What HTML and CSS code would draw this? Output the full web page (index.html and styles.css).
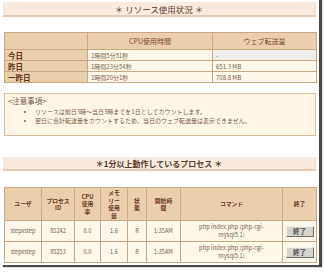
FILE: index.html
```html
<!DOCTYPE html>
<html lang="ja">
<head>
<meta charset="utf-8">
<link rel="stylesheet" href="styles.css">
</head>
<body>
<div class="frame">
  <div class="bar bar-first">＊ リソース使用状況 ＊</div>
  <table class="usage">
    <colgroup><col class="c1"><col class="c2"><col class="c3"></colgroup>
    <tr><th></th><th>CPU使用時間</th><th>ウェブ転送量</th></tr>
    <tr><th class="rh">今日</th><td>1時間5分51秒</td><td class="na">-</td></tr>
    <tr><th class="rh">昨日</th><td>1時間23分54秒</td><td>651.3 MB</td></tr>
    <tr><th class="rh">一昨日</th><td>1時間20分1秒</td><td>708.8 MB</td></tr>
  </table>
  <div class="notes">
    <div class="notes-title">&lt;注意事項&gt;</div>
    <ul>
      <li>リソースは前日3時～当日3時までを1日としてカウントします。</li>
      <li>翌日に合計転送量をカウントするため、当日のウェブ転送量は表示できません。</li>
    </ul>
  </div>
  <div class="bar bar-second">＊1分以上動作しているプロセス ＊</div>
  <table class="procs">
    <colgroup>
      <col class="p1"><col class="p2"><col class="p3"><col class="p4">
      <col class="p5"><col class="p6"><col class="p7"><col class="p8">
    </colgroup>
    <tr>
      <th>ユーザ</th><th>プロセス<br>ID</th><th>CPU<br>使用<br>率</th><th>メモ<br>リー<br>使用<br>量</th>
      <th>状<br>態</th><th>開始時<br>間</th><th>コマンド</th><th>終了</th>
    </tr>
    <tr>
      <td>stepxstep</td><td>85242</td><td>0.0</td><td>1.6</td><td>R</td><td>1:35AM</td>
      <td class="cmd">php index.php (php-cgi-<br>mysql5.1)</td><td><button class="kill">終了</button></td>
    </tr>
    <tr>
      <td>stepxstep</td><td>85253</td><td>0.0</td><td>1.6</td><td>R</td><td>1:35AM</td>
      <td class="cmd">php index.php (php-cgi-<br>mysql5.1)</td><td><button class="kill">終了</button></td>
    </tr>
  </table>
</div>
</body>
</html>
```

FILE: styles.css
```css
* { box-sizing: border-box; }
html, body { margin: 0; padding: 0; background: #fff; }
body {
  width: 324px; height: 272px; overflow: hidden;
  font-family: "Noto Sans CJK JP", "Noto Sans", sans-serif;
  color: #6b4a38;
}
.frame {
  width: 319px;
  height: 268px;
  margin-top: -3px;
  padding: 5px 3px 0 4px;
  background: #fff;
  box-shadow: 3px 2px 1px rgba(40,40,40,0.85);
}
.bar {
  height: 15px;
  margin-left: -1px;
  background: #f8eadf;
  border-bottom: 2px solid #e3cbb4;
  border-right: 1px solid #ead6c4;
  text-align: center;
  font-size: 8.5px;
  line-height: 14px;
  color: #5a3a28;
}
.bar-second { margin-top: 21px; height: 14px; line-height: 13px; font-weight: bold; font-size: 8px; }
table { border-collapse: collapse; width: 312px; table-layout: fixed; }
th, td { border: 1px solid #cba883; padding: 0; }
.usage { margin-top: 15px; }
.usage .c1 { width: 83px; }
.usage .c2 { width: 125px; }
.usage .c3 { width: 104px; }
.usage th {
  background: #eacfad;
  height: 17px;
  font-weight: normal;
  font-size: 7px;
  color: #7a4c2c;
  text-align: center;
}
.usage th.rh {
  height: 11px;
  text-align: left;
  padding-left: 3px;
  font-weight: bold;
  font-size: 7.5px;
  line-height: 9px;
  color: #5c3218;
}
.usage td {
  background: #fff8ea;
  font-size: 6px;
  line-height: 9px;
  padding-left: 3px;
  color: #7a5a48;
}
.usage td.na {
  background-color: #f0eeec;
  background-image: radial-gradient(#d8d6d4 0.5px, transparent 0.6px);
  background-size: 2px 2px;
}
.notes {
  margin-top: 10px;
  height: 43px;
  background: #fff6e8;
  border: 1px solid #d9bc9d;
  padding: 2px 0 0 3px;
}
.notes-title { font-size: 7.5px; line-height: 10px; color: #7a5a48; }
.notes ul { margin: 2px 0 0; padding-left: 27px; font-size: 6px; line-height: 8.5px; color: #7a5a48; }
.procs { margin-top: 16px; }
.procs .p1 { width: 37px; }
.procs .p2 { width: 33px; }
.procs .p3 { width: 26px; }
.procs .p4 { width: 27px; }
.procs .p5 { width: 19px; }
.procs .p6 { width: 34px; }
.procs .p7 { width: 102px; }
.procs .p8 { width: 34px; }
.procs th {
  background: #eacfad;
  height: 33px;
  font-size: 5.8px;
  line-height: 7.5px;
  font-weight: bold;
  color: #6a3a1c;
  text-align: center;
}
.procs td {
  background: #fff8ea;
  height: 21px;
  font-size: 5.6px;
  line-height: 6.5px;
  text-align: center;
  color: #7a5a48;
}
.procs td.cmd { font-size: 5.8px; line-height: 7.5px; vertical-align: top; padding-top: 2px; }
.kill {
  display: block;
  margin: 0 auto;
  width: 28px;
  height: 11px;
  padding: 0;
  font-family: "Noto Sans CJK JP", sans-serif;
  font-size: 6.5px;
  line-height: 9px;
  font-weight: bold;
  color: #555;
  background: #d6d3cd;
  border: 1px solid;
  border-color: #f4f2ee #6e6c68 #6e6c68 #f4f2ee;
}
```
